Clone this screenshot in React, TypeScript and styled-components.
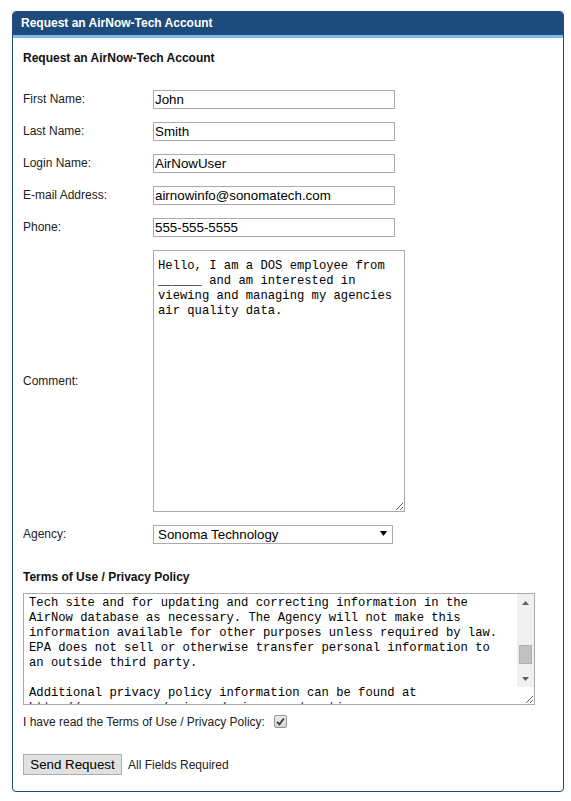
import { useLayoutEffect, useRef } from "react";
import styled, { createGlobalStyle } from "styled-components";

const GlobalStyle = createGlobalStyle`
    body {
        margin: 0;
        background: #fff;
        font-family: "Liberation Sans", Arial, sans-serif;
    }
`;

const termsText = [
    "Terms of Use",
    "",
    "By requesting an account you agree to use AirNow-Tech data for",
    "official purposes only. Preliminary data are subject to change",
    "and should not be used to draw conclusions about air quality.",
    "",
    "Privacy Policy",
    "",
    "The information you provide on this form is collected by EPA",
    "solely for the purpose of creating and managing your AirNow-",
    "Tech site and for updating and correcting information in the",
    "AirNow database as necessary. The Agency will not make this",
    "information available for other purposes unless required by law.",
    "EPA does not sell or otherwise transfer personal information to",
    "an outside third party.",
    "",
    "Additional privacy policy information can be found at",
    "http://www.epa.gov/privacy/privacy-act-notice",
    "",
    "Questions may be directed to the AirNow program staff.",
    "",
].join("\n");

const commentText =
    "Hello, I am a DOS employee from\n______ and am interested in\nviewing and managing my agencies\nair quality data.";

const fields = [
    { label: "First Name:", value: "John" },
    { label: "Last Name:", value: "Smith" },
    { label: "Login Name:", value: "AirNowUser" },
    { label: "E-mail Address:", value: "airnowinfo@sonomatech.com" },
    { label: "Phone:", value: "555-555-5555" },
];

export default function App() {
    const termsRef = useRef<HTMLTextAreaElement>(null);

    useLayoutEffect(() => {
        // start the terms box scrolled to the "Tech site..." line
        if (termsRef.current) termsRef.current.scrollTop = 150;
    }, []);

    return (
        <Page>
            <GlobalStyle />
            <Panel>
                <Header>Request an AirNow-Tech Account</Header>
                <Body>
                    <Heading>Request an AirNow-Tech Account</Heading>
                    <FormGrid>
                        {fields.map((f) => (
                            <Row key={f.label}>
                                <Label>{f.label}</Label>
                                <TextInput defaultValue={f.value} />
                            </Row>
                        ))}
                        <Row>
                            <Label>Comment:</Label>
                            <Comment defaultValue={commentText} />
                        </Row>
                        <Row>
                            <Label>Agency:</Label>
                            <SelectWrap>
                                <Select defaultValue="sti">
                                    <option value="sti">Sonoma Technology</option>
                                    <option value="epa">US EPA</option>
                                </Select>
                                <SelectArrow width="7" height="5" viewBox="0 0 7 5">
                                    <path d="M0 0 L7 0 L3.5 5 Z" fill="#000" />
                                </SelectArrow>
                            </SelectWrap>
                        </Row>
                    </FormGrid>

                    <SubHeading>Terms of Use / Privacy Policy</SubHeading>
                    <TermsWrap>
                        <Terms ref={termsRef} readOnly defaultValue={termsText} />
                        <ScrollTrack>
                            <ScrollButton>
                                <svg width="7" height="4" viewBox="0 0 7 4">
                                    <path d="M0 4 L3.5 0 L7 4 Z" fill="#606060" />
                                </svg>
                            </ScrollButton>
                            <ScrollRail>
                                <Thumb />
                            </ScrollRail>
                            <ScrollButton>
                                <svg width="7" height="4" viewBox="0 0 7 4">
                                    <path d="M0 0 L7 0 L3.5 4 Z" fill="#606060" />
                                </svg>
                            </ScrollButton>
                        </ScrollTrack>
                    </TermsWrap>

                    <AgreeRow>
                        I have read the Terms of Use / Privacy Policy:
                        <CheckBox>
                            <svg width="9" height="9" viewBox="0 0 8 8">
                                <path
                                    d="M1 4.3 L3 6.5 L7 1.3"
                                    fill="none"
                                    stroke="#3a3a3a"
                                    strokeWidth="1.6"
                                />
                            </svg>
                        </CheckBox>
                    </AgreeRow>

                    <ActionRow>
                        <Button type="button">Send Request</Button>
                        <Note>All Fields Required</Note>
                    </ActionRow>
                </Body>
            </Panel>
        </Page>
    );
}

const Page = styled.div`
    padding: 11px 7px 8px 12px;
`;

const Panel = styled.div`
    width: 552px;
    box-sizing: border-box;
    border: 1px solid #1d4b7b;
    border-radius: 4px;
    overflow: hidden;
`;

const Header = styled.div`
    height: 23px;
    line-height: 23px;
    padding-left: 8px;
    background: #1d4b7b;
    border-bottom: 3px solid #7db9ee;
    color: #fff;
    font-size: 12px;
    font-weight: bold;
`;

const Body = styled.div`
    padding: 13px 10px 16px 10px;
    color: #222;
    font-size: 12px;
`;

const Heading = styled.div`
    font-weight: bold;
    line-height: 15px;
    color: #111;
    margin-bottom: 24px;
`;

const FormGrid = styled.div`
    display: grid;
    grid-template-columns: 130px 1fr;
    row-gap: 13px;
    align-items: center;
`;

const Row = styled.div`
    display: contents;
`;

const Label = styled.div`
    line-height: 15px;
`;

const TextInput = styled.input`
    width: 242px;
    height: 19px;
    box-sizing: border-box;
    border: 1px solid #aaa;
    padding: 0 1px;
    margin: 0;
    font-family: "Liberation Sans", Arial, sans-serif;
    font-size: 13.33px;
    color: #000;
    outline: none;
`;

const mono = `"Liberation Mono", "DejaVu Sans Mono", monospace`;

const Comment = styled.textarea`
    width: 252px;
    height: 262px;
    box-sizing: border-box;
    border: 1px solid #aaa;
    padding: 8px 4px 5px 4px;
    margin: 0;
    font-family: ${mono};
    font-size: 12.2px;
    line-height: 15px;
    color: #000;
    resize: both;
    outline: none;
    display: block;
`;

const SelectWrap = styled.div`
    position: relative;
    width: 240px;
    height: 19px;
`;

const Select = styled.select`
    appearance: none;
    width: 100%;
    height: 19px;
    box-sizing: border-box;
    border: 1px solid #aaa;
    border-radius: 0;
    padding: 0 0 0 4px;
    margin: 0;
    background: #fff;
    font-family: "Liberation Sans", Arial, sans-serif;
    font-size: 13.33px;
    color: #000;
    outline: none;
`;

const SelectArrow = styled.svg`
    position: absolute;
    right: 6px;
    top: 6px;
    pointer-events: none;
`;

const SubHeading = styled.div`
    font-weight: bold;
    line-height: 15px;
    color: #111;
    margin-top: 26px;
    margin-bottom: 8px;
`;

const TermsWrap = styled.div`
    position: relative;
    width: 512px;
    height: 112px;
`;

const Terms = styled.textarea`
    width: 512px;
    height: 112px;
    box-sizing: border-box;
    border: 1px solid #aaa;
    padding: 2px 22px 1px 5px;
    margin: 0;
    font-family: ${mono};
    font-size: 12.2px;
    line-height: 15px;
    color: #000;
    white-space: pre;
    overflow: hidden;
    resize: both;
    outline: none;
    display: block;
`;

const ScrollTrack = styled.div`
    position: absolute;
    top: 1px;
    right: 1px;
    width: 17px;
    bottom: 18px;
    background: #f0f0f0;
    display: flex;
    flex-direction: column;
`;

const ScrollButton = styled.div`
    height: 17px;
    display: flex;
    align-items: center;
    justify-content: center;
`;

const ScrollRail = styled.div`
    flex: 1;
    padding: 0 2px;
`;

const Thumb = styled.div`
    margin-top: 34px;
    height: 19px;
    box-sizing: border-box;
    background: #c1c1c1;
    border: 1px solid #b0b0b0;
`;

const AgreeRow = styled.div`
    display: flex;
    align-items: center;
    gap: 9px;
    line-height: 15px;
    margin-top: 10px;
`;

const CheckBox = styled.span`
    display: inline-flex;
    align-items: center;
    justify-content: center;
    width: 13px;
    height: 13px;
    box-sizing: border-box;
    border: 1px solid #949494;
    border-radius: 2px;
    background: linear-gradient(#ececec, #d6d6d6);
    margin-top: -3px;
`;

const ActionRow = styled.div`
    display: flex;
    align-items: center;
    gap: 6px;
    margin-top: 24px;
`;

const Button = styled.button`
    height: 21px;
    width: 99px;
    box-sizing: border-box;
    padding: 0;
    margin: 0;
    border: 1px solid #adadad;
    border-radius: 0;
    background: #e1e1e1;
    font-family: "Liberation Sans", Arial, sans-serif;
    font-size: 13.33px;
    color: #000;
`;

const Note = styled.span`
    font-size: 12px;
`;
